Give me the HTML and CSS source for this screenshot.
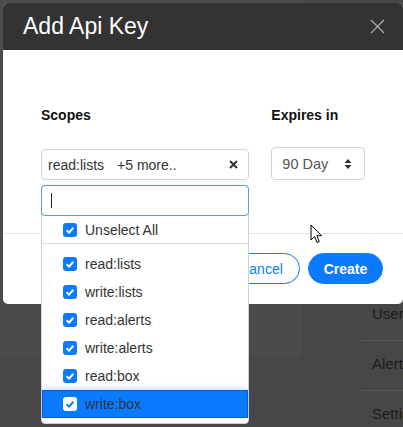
FILE: index.html
```html
<!DOCTYPE html>
<html>
<head>
<meta charset="utf-8">
<link rel="stylesheet" href="styles.css">
</head>
<body>
<div class="page">
  <div class="main"><div class="card"></div></div>
  <div class="sidebar">
    <div class="side-item">Users</div>
    <div class="side-item">Alerts</div>
    <div class="side-item">Settings</div>
  </div>
</div>

<div class="modal">
  <div class="modal-header">
    <div class="modal-title">Add Api Key</div>
    <svg class="close" width="15" height="15" viewBox="0 0 15 15"><path d="M1 1L14 14M14 1L1 14" stroke="#a8a8a8" stroke-width="1.4" fill="none"/></svg>
  </div>
  <div class="modal-body">
    <div class="field scopes">
      <div class="label">Scopes</div>
      <div class="multi">
        <span class="chosen">read:lists</span><span class="more">+5 more..</span>
        <svg class="clear" width="9" height="9" viewBox="0 0 9 9"><path d="M1 1L8 8M8 1L1 8" stroke="#333" stroke-width="2" fill="none"/></svg>
      </div>
      <div class="dropdown">
        <div class="search"><span class="caret"></span></div>
        <div class="opt"><span class="cb"><svg width="14" height="14" viewBox="0 0 14 14"><path d="M3.6 7.3L6 9.6L10.4 4.8" stroke="#fff" stroke-width="2" fill="none"/></svg></span>Unselect All</div>
        <div class="sep"></div>
        <div class="list">
          <div class="opt"><span class="cb"><svg width="14" height="14" viewBox="0 0 14 14"><path d="M3.6 7.3L6 9.6L10.4 4.8" stroke="#fff" stroke-width="2" fill="none"/></svg></span>read:lists</div>
          <div class="opt"><span class="cb"><svg width="14" height="14" viewBox="0 0 14 14"><path d="M3.6 7.3L6 9.6L10.4 4.8" stroke="#fff" stroke-width="2" fill="none"/></svg></span>write:lists</div>
          <div class="opt"><span class="cb"><svg width="14" height="14" viewBox="0 0 14 14"><path d="M3.6 7.3L6 9.6L10.4 4.8" stroke="#fff" stroke-width="2" fill="none"/></svg></span>read:alerts</div>
          <div class="opt"><span class="cb"><svg width="14" height="14" viewBox="0 0 14 14"><path d="M3.6 7.3L6 9.6L10.4 4.8" stroke="#fff" stroke-width="2" fill="none"/></svg></span>write:alerts</div>
          <div class="opt"><span class="cb"><svg width="14" height="14" viewBox="0 0 14 14"><path d="M3.6 7.3L6 9.6L10.4 4.8" stroke="#fff" stroke-width="2" fill="none"/></svg></span>read:box</div>
          <div class="opt active"><span class="cb"><svg width="14" height="14" viewBox="0 0 14 14"><path d="M3.6 7.3L6 9.6L10.4 4.8" stroke="#0a7bff" stroke-width="2" fill="none"/></svg></span>write:box</div>
        </div>
      </div>
    </div>
    <div class="field expires">
      <div class="label">Expires in</div>
      <div class="select">
        <span>90 Day</span>
        <svg class="arrows" width="8" height="12" viewBox="0 0 8 12"><path d="M0.5 5L4 1L7.5 5Z M0.5 7L4 11L7.5 7Z" fill="#333"/></svg>
      </div>
    </div>
  </div>
  <div class="modal-footer">
    <button class="btn btn-outline">Cancel</button>
    <button class="btn btn-primary">Create</button>
  </div>
</div>

<svg class="cursor" width="13" height="21" viewBox="0 0 13 21"><path d="M1 1L1 16L4.5 12.5L7 18.5L9.3 17.5L6.8 11.7L11.5 11.7Z" fill="#fff" stroke="#000" stroke-width="1"/></svg>
</body>
</html>
```

FILE: styles.css
```css
* { box-sizing: border-box; }
html, body {
  margin: 0;
  padding: 0;
}
body {
  width: 403px;
  height: 427px;
  overflow: hidden;
  background: #474747;
  font-family: "Liberation Sans", Arial, sans-serif;
  position: relative;
}

.page {
  display: flex;
  height: 427px;
}
.main {
  width: 302px;
}
.card {
  height: 356px;
  background: #4b4b4b;
  border-radius: 0 0 5px 0;
}
.sidebar {
  margin-left: 59px;
  flex: 1;
  padding-top: 291px;
  overflow: hidden;
}
.side-item {
  height: 50px;
  padding: 14px 0 0 11px;
  font-size: 15px;
  line-height: 17px;
  color: #1c1c1c;
  border-bottom: 1px solid #585858;
  white-space: nowrap;
}

.modal {
  position: absolute;
  top: 3px;
  left: 3px;
  width: 400px;
  height: 301px;
  background: #fff;
  border-radius: 5px;
}
.modal-header {
  height: 47px;
  background: #333;
  border-radius: 5px 5px 0 0;
  display: flex;
  align-items: center;
  justify-content: space-between;
  padding: 0 18px 0 20px;
}
.modal-title {
  color: #fff;
  font-size: 23px;
  line-height: 26px;
  margin-top: -1px;
}
.close {
  display: block;
  margin-top: -1px;
}

.modal-body {
  height: 183px;
  padding: 57px 38px 0 38px;
  display: flex;
  gap: 22px;
}
.label {
  font-size: 14px;
  line-height: 17px;
  font-weight: bold;
  color: #111;
}
.field { position: relative; }
.scopes { width: 209px; }
.expires { width: 94px; }

.multi {
  margin-top: 25px;
  height: 31px;
  border: 1px solid #d4d4d4;
  border-radius: 4px;
  display: flex;
  align-items: center;
  padding: 0 0 0 6px;
  font-size: 14px;
  color: #333;
}
.more { margin-left: 13px; }
.clear { margin-left: auto; margin-right: 10px; display: block; }

.select {
  margin-top: 23px;
  height: 33px;
  border: 1px solid #d4d4d4;
  border-radius: 4px;
  display: flex;
  align-items: center;
  justify-content: space-between;
  padding: 0 12px 0 10px;
  font-size: 14.5px;
  color: #555;
}
.arrows { display: block; }

.dropdown {
  position: absolute;
  top: 78px;
  left: 0;
  width: 208px;
  background: #fff;
  border: 1px solid #cfcfcf;
  border-radius: 4px;
  padding-bottom: 5px;
  z-index: 5;
}
.search {
  margin: -1px -1px 0 -1px;
  height: 31px;
  border: 1px solid #5a9bec;
  border-radius: 4px;
  display: flex;
  align-items: center;
  padding-left: 9px;
}
.caret {
  width: 1px;
  height: 15px;
  background: #222;
}
.opt {
  height: 28px;
  display: flex;
  align-items: center;
  padding-left: 21px;
  font-size: 14px;
  color: #333;
}
.dropdown > .opt { height: 27px; }
.cb {
  width: 14px;
  height: 14px;
  border-radius: 3px;
  background: #0a7bff;
  margin-right: 8px;
  display: block;
}
.cb svg { display: block; }
.sep {
  height: 1px;
  background: #dcdcdc;
}
.list { padding-top: 6px; }
.opt.active {
  background: #0a7bff;
  box-shadow: inset 0 0 0 1px rgba(0, 0, 0, 0.25), 0 -3px 5px rgba(10, 123, 255, 0.15);
}
.opt.active .cb { background: #fff; }

.modal-footer {
  border-top: 1px solid #e6e6e6;
  height: 71px;
  padding: 19px 20px 0 0;
  display: flex;
  justify-content: flex-end;
  align-items: flex-start;
  gap: 8px;
}
.btn {
  height: 31px;
  border-radius: 16px;
  font-family: "Liberation Sans", Arial, sans-serif;
  font-size: 14px;
  padding: 0;
  border: 1px solid #0a7bff;
  margin: 0;
  text-align: center;
}
.btn-outline {
  width: 78px;
  background: #fff;
  color: #0a7bff;
}
.btn-primary {
  width: 75px;
  background: #0a7bff;
  color: #fff;
  font-weight: bold;
}

.cursor {
  position: absolute;
  left: 310px;
  top: 224px;
  z-index: 10;
}
```
